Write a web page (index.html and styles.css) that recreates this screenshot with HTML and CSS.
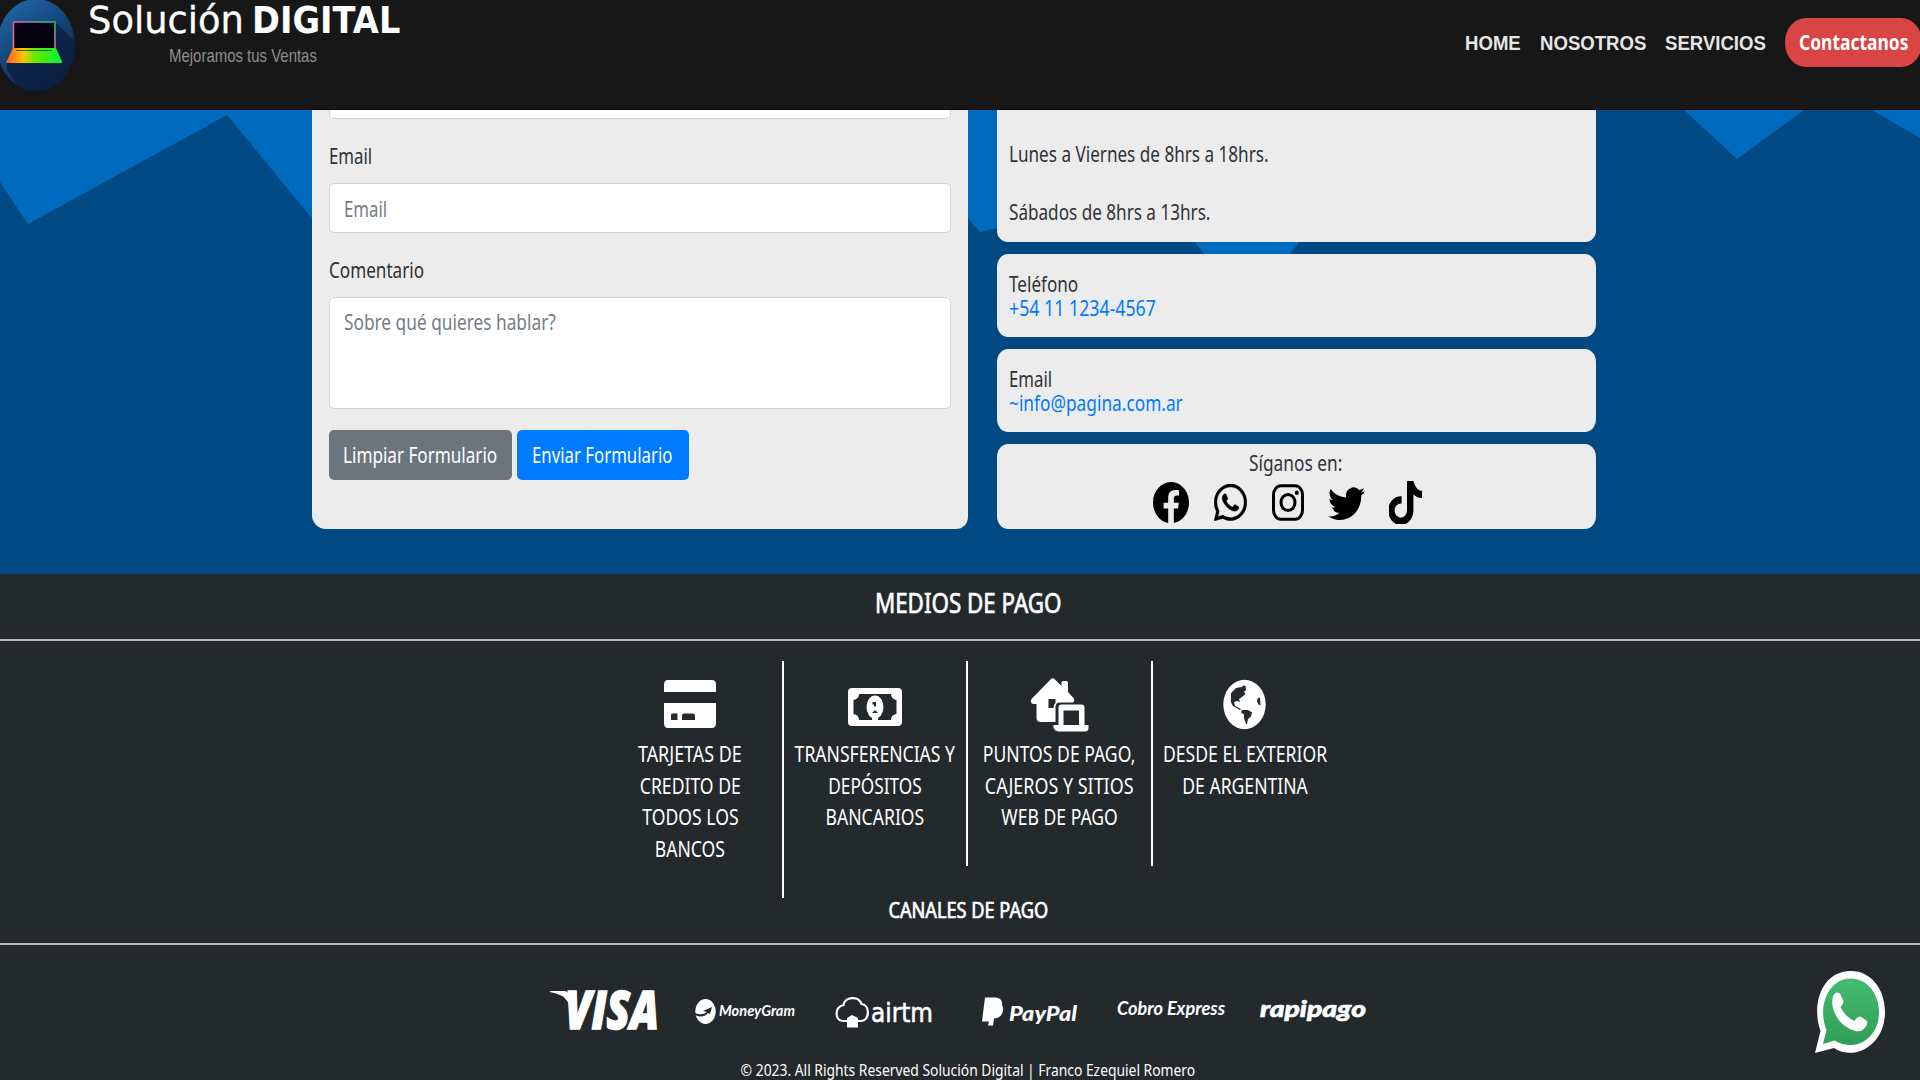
FILE: index.html
```html
<!DOCTYPE html>
<html lang="es">
<head>
<meta charset="utf-8">
<title>Solución Digital</title>
<link rel="stylesheet" href="styles.css">
</head>
<body>
<header class="header">
  <svg class="logo" viewBox="0 0 76 92">
    <defs>
      <linearGradient id="disc" x1="0" y1="0" x2=".6" y2="1"><stop offset="0" stop-color="#1d6fae"/><stop offset=".5" stop-color="#17477f"/><stop offset="1" stop-color="#101f45"/></linearGradient>
      <linearGradient id="base" x1="0" y1="0" x2="1" y2="0"><stop offset="0" stop-color="#ff5a1e"/><stop offset=".3" stop-color="#ffc400"/><stop offset=".5" stop-color="#6be800"/><stop offset="1" stop-color="#00f53d"/></linearGradient>
      <linearGradient id="frame" x1="0" y1="1" x2="1" y2="0"><stop offset="0" stop-color="#ff7a30"/><stop offset=".5" stop-color="#e35ab0"/><stop offset="1" stop-color="#15c96a"/></linearGradient>
      <clipPath id="round"><ellipse cx="36" cy="45" rx="39" ry="46"/></clipPath>
    </defs>
    <ellipse cx="36" cy="45" rx="39" ry="46" fill="url(#disc)"/>
    <path d="M55 22l25 24v50H24L7 70V62z" fill="#0b1f40" opacity=".75" clip-path="url(#round)"/>
    <rect x="13.500" y="22" width="41.500" height="27" fill="#05030f" stroke="url(#frame)" stroke-width="1.600"/>
    <path d="M13 48h43l6 13.500V63H6.500v-1.500z" fill="url(#base)"/>
    <path d="M16 50.500h36" stroke="#2a6a20" stroke-width="1"/>
  </svg>
  <div class="brand">
    <div class="brand-name"><span class="fit thin">Solución</span><span class="fit thick">DIGITAL</span></div>
    <div class="tagline"><span class="fit">Mejoramos tus Ventas</span></div>
  </div>
  <nav class="nav">
    <a class="nav-home"><span class="fit">HOME</span></a>
    <a class="nav-about"><span class="fit">NOSOTROS</span></a>
    <a class="nav-services"><span class="fit">SERVICIOS</span></a>
    <a class="cta"><span class="fit">Contactanos</span></a>
  </nav>
</header>

<main class="contact">
  <svg class="backdrop" viewBox="0 0 1920 464">
    <path fill="#006bbe" d="M0 0V72L28 114 227 5 330 130V0zM950 0V87L980 122 1010 115V0zM1150 70L1204 144H1290L1345 70zM1684 0L1737 49 1804 0zM1872 0L1920 28V0z"/>
  </svg>
  <section class="form">
    <div class="field field-cut"></div>
    <div class="label"><span class="fit narrow">Email</span></div>
    <div class="field"><span class="fit narrow">Email</span></div>
    <div class="label"><span class="fit">Comentario</span></div>
    <div class="field area"><span class="fit wide">Sobre qué quieres hablar?</span></div>
    <div class="buttons">
      <div class="btn clear"><span class="fit">Limpiar Formulario</span></div>
      <div class="btn send"><span class="fit narrow">Enviar Formulario</span></div>
    </div>
  </section>
  <aside class="info">
    <div class="card hours">
      <p><span class="fit">Lunes a Viernes de 8hrs a 18hrs.</span></p>
      <p><span class="fit">Sábados de 8hrs a 13hrs.</span></p>
    </div>
    <div class="card pair">
      <p><span class="fit">Teléfono</span></p>
      <a><span class="fit phone">+54 11 1234-4567</span></a>
    </div>
    <div class="card pair">
      <p><span class="fit narrow">Email</span></p>
      <a><span class="fit wide">~info@pagina.com.ar</span></a>
    </div>
    <div class="card social">
      <p><span class="fit wide">Síganos en:</span></p>
      <div class="social-row">
        <svg class="s-fb" viewBox="0 0 16 16" preserveAspectRatio="none"><path d="M16 8.049c0-4.446-3.582-8.050-8-8.050C3.580 0-.002 3.603-.002 8.050c0 4.017 2.926 7.347 6.750 7.951v-5.625h-2.030V8.050H6.750V6.275c0-2.017 1.195-3.131 3.022-3.131.876 0 1.791.157 1.791.157v1.980h-1.009c-.993 0-1.303.621-1.303 1.258v1.510h2.218l-.354 2.326H9.250V16c3.824-.604 6.750-3.934 6.750-7.951z"/></svg>
        <svg class="s-wa" viewBox="0 0 16 16" preserveAspectRatio="none"><path d="M13.601 2.326A7.854 7.854 0 0 0 7.994 0C3.627 0 .068 3.558.064 7.926c0 1.399.366 2.760 1.057 3.965L0 16l4.204-1.102a7.933 7.933 0 0 0 3.790.965h.004c4.368 0 7.926-3.558 7.930-7.930A7.898 7.898 0 0 0 13.600 2.326zM7.994 14.521a6.573 6.573 0 0 1-3.356-.920l-.240-.144-2.494.654.666-2.433-.156-.251a6.560 6.560 0 0 1-1.007-3.505c0-3.626 2.957-6.584 6.591-6.584a6.560 6.560 0 0 1 4.660 1.931 6.557 6.557 0 0 1 1.928 4.660c-.004 3.639-2.961 6.592-6.592 6.592zm3.615-4.934c-.197-.099-1.170-.578-1.353-.646-.182-.065-.315-.099-.445.099-.133.197-.513.646-.627.775-.114.133-.232.148-.430.050-.197-.100-.836-.308-1.592-.985-.590-.525-.985-1.175-1.103-1.372-.114-.198-.011-.304.088-.403.087-.088.197-.232.296-.346.100-.114.133-.198.198-.330.065-.134.034-.248-.015-.347-.050-.099-.445-1.076-.612-1.470-.160-.389-.323-.335-.445-.340-.114-.007-.247-.007-.380-.007a.729.729 0 0 0-.529.247c-.182.198-.691.677-.691 1.654 0 .977.710 1.916.810 2.049.098.133 1.394 2.132 3.383 2.992.470.205.840.326 1.129.418.475.152.904.129 1.246.080.380-.058 1.171-.480 1.338-.943.164-.464.164-.860.114-.943-.049-.084-.182-.133-.380-.232z" stroke="#000" stroke-width=".15"/></svg>
        <svg class="s-ig" viewBox="0 0 32 37"><rect x="1.500" y="1.700" width="29" height="33.600" rx="7.500" ry="9" fill="none" stroke="#000" stroke-width="3"/><ellipse cx="16" cy="18.500" rx="7" ry="8" fill="none" stroke="#000" stroke-width="3"/><ellipse cx="24.800" cy="8.800" rx="2" ry="2.300"/></svg>
        <svg class="s-tw" viewBox="0 1 16 14" preserveAspectRatio="none"><path d="M5.026 15c6.038 0 9.341-5.003 9.341-9.334 0-.140 0-.282-.006-.422A6.685 6.685 0 0 0 16 3.542a6.658 6.658 0 0 1-1.889.518 3.301 3.301 0 0 0 1.447-1.817 6.533 6.533 0 0 1-2.087.793A3.286 3.286 0 0 0 7.875 6.030a9.325 9.325 0 0 1-6.767-3.429 3.289 3.289 0 0 0 1.018 4.382A3.323 3.323 0 0 1 .640 6.575v.045a3.288 3.288 0 0 0 2.632 3.218 3.203 3.203 0 0 1-.865.115 3.230 3.230 0 0 1-.614-.057 3.283 3.283 0 0 0 3.067 2.277A6.588 6.588 0 0 1 .780 13.580a6.320 6.320 0 0 1-.780-.045A9.344 9.344 0 0 0 5.026 15z"/></svg>
        <svg class="s-tt" viewBox="1 0 14 16" preserveAspectRatio="none"><path d="M9 0h1.980c.144.715.540 1.617 1.235 2.512C12.895 3.389 13.797 4 15 4v2c-1.753 0-3.070-.814-4-1.829V11a5 5 0 1 1-5-5v2a3 3 0 1 0 3 3V0z" stroke="#000" stroke-width=".7"/></svg>
      </div>
    </div>
  </aside>
</main>

<footer class="footer">
  <h2><span class="fit">MEDIOS DE PAGO</span></h2>
  <div class="methods">
    <div class="method">
      <svg viewBox="0 0 60 60"><path d="M10 7h40q4 0 4 5v7H2v-7q0-5 4-5zM2 30h52v20q0 5-4 5H6q-4 0-4-5zM10 40.500q-1 0-1 1.500v5h6.500v-6.500zM22 40.500q-2 0-2 2V47h13v-4q0-2.500-2-2.500z" transform="translate(2 0)" fill="#fff" fill-rule="evenodd"/></svg>
      <p><span class="fit wider">TARJETAS DE</span></p><p><span class="fit">CREDITO DE</span></p><p><span class="fit">TODOS LOS</span></p><p><span class="fit">BANCOS</span></p>
    </div>
    <div class="method">
      <svg viewBox="0 0 60 60"><path fill="#fff" fill-rule="evenodd" d="M7 15H53q4 0 4 4V49q0 4-4 4H7q-4 0-4-4V19q0-4 4-4zM14 21q0 5-5.500 6V41q5.500 1 5.500 6H46q0-5 5.500-6V27q-5.500-1-5.500-6z"/><ellipse cx="30" cy="34" rx="8.500" ry="11.500" fill="#fff"/><path d="M27 42h6v8h-6z" fill="#fff"/><path d="M27.500 29h3.500v4.500h-2v-2h-1.500zM27 40l3-3 3 3z" fill="#24292c"/></svg>
      <p><span class="fit">TRANSFERENCIAS Y</span></p><p><span class="fit tight">DEPÓSITOS</span></p><p><span class="fit">BANCARIOS</span></p>
    </div>
    <div class="method">
      <svg viewBox="0 0 60 60"><path fill="#fff" d="M22.500 5.500q1.500-.8 3 .5l7 7V9.500q0-1.500 1.500-1.500h3.500q1.500 0 1.500 1.500V19l5.500 6q2 2.500-.5 4.500H30q-3.500.5-3.500 4.500V49H12q-4.500 0-4.500-4.500V31H4q-3.500-1.500-1.500-5z"/><path fill="#24292c" d="M19.500 26h7v4q-2 1.500-2 5h-5z"/><path fill="#fff" fill-rule="evenodd" d="M32.500 31.500h20q3 0 3 3V52h4v3q0 3.500-4 3.500h-26q-4-.5-5-4V52h5V34.500q0-3 3-3zM34.500 37.500V52H50V37.500z"/></svg>
      <p><span class="fit">PUNTOS DE PAGO,</span></p><p><span class="fit wider">CAJEROS Y SITIOS</span></p><p><span class="fit">WEB DE PAGO</span></p>
    </div>
    <div class="method">
      <svg viewBox="0 0 60 60"><ellipse cx="29.500" cy="31.500" rx="21.200" ry="24.700" fill="#fff"/><path fill="#24292c" d="M16 20l5-5 6-1 1-1.500 2.500.5.500 4-2 2 1.500 2-3.500 3-3 2 1 3-3-1-3 1 1 4 6 3-1 1-7-4q-3-4-2-8zM27 37h6l4 2.500-1 4-3 2.500-1 5h-1l-2-6v-3.500l-3-2zM42.500 25.500l2.500-1 .5 8-2-1-1.500-3z"/></svg>
      <p><span class="fit">DESDE EL EXTERIOR</span></p><p><span class="fit">DE ARGENTINA</span></p>
    </div>
  </div>
  <h3><span class="fit">CANALES DE PAGO</span></h3>
  <svg class="channels" viewBox="540 980 840 60" fill="#fff">
    <text class="l-visa" x="565" y="1029" textLength="94" lengthAdjust="spacingAndGlyphs">VISA</text>
    <path d="M550 991h15q4 1 5 6l4 18-6-13q-5-8-18-10z"/>
    <ellipse cx="705.500" cy="1011.500" rx="10.200" ry="12.500"/>
    <path d="M695 1013q7 3 12-1l-4-1 9-4-2 7-2-1q-5 6-13 2" fill="#24292c"/>
    <text class="l-mg" x="719" y="1016" textLength="76" lengthAdjust="spacingAndGlyphs">MoneyGram</text>
    <path d="M847.500 1021h-5c-8-1-8-14 1-16 1-8 15-10 18-1 9 1 8 17 0 17h-7" fill="none" stroke="#fff" stroke-width="2.200"/>
    <path d="M847 1018l5-3 6 3v9.500h-11z"/>
    <text class="l-air" x="871" y="1021.500" textLength="62" lengthAdjust="spacingAndGlyphs">airtm</text>
    <path d="M985 997.500h11q7 1 6 8 3 4-1 10-3 3-7 3l-1 7h-5l1-4h-7z"/>
    <text class="l-pp" x="1009" y="1020.500" textLength="68" lengthAdjust="spacingAndGlyphs">PayPal</text>
    <text class="l-ce" x="1117" y="1015" textLength="108" lengthAdjust="spacingAndGlyphs">Cobro Express</text>
    <text class="l-rp" x="1260" y="1016.500" textLength="106" lengthAdjust="spacingAndGlyphs">rapipago</text>
  </svg>
  <div class="copyright"><span class="fit">© 2023. All Rights Reserved Solución Digital | Franco Ezequiel Romero</span></div>
</footer>

<svg class="chat" viewBox="0 0 70 82">
  <defs><linearGradient id="wa" x1="0" y1="0" x2="0" y2="1"><stop offset="0" stop-color="#46ba70"/><stop offset="1" stop-color="#2f9f55"/></linearGradient></defs>
  <path fill="#fff" d="M0 82L5.500 60C-4 33 7 0 36 0c20 0 34 18 34 41 0 32-29 50-51 36z"/>
  <path fill="url(#wa)" d="M8 73l3.500-14C2 36 13 7.500 36 7.500c16 0 28 15 28 33.500 0 27-24 41-44.500 28.500z"/>
  <path fill="#fff" d="M18.500 24q4-4.500 7-.5l3 7q0 3-3 5.500 5 10 14 14 3-5 6-4.500l6 4q1.500 2 0 5-4 7-11 5.500Q22 55 17.500 35q-1-6 1-11z"/>
</svg>
</body>
</html>
```
FILE: styles.css
```css
* { box-sizing: border-box; }
body { margin: 0; width: 1920px; height: 1080px; overflow: hidden; background: #24292c; color: #2f3337; font: 21px/32px "Noto Sans", sans-serif; }
p, h2, h3 { margin: 0; font-weight: 400; }
svg { display: block; }
.fit { display: inline-block; white-space: nowrap; transform: scaleX(.815); transform-origin: 0 50%; }
.narrow { transform: scaleX(.8); }
.wide { transform: scaleX(.823); }
.phone { transform: scaleX(.845); }

.header { display: flex; height: 110px; background: #171717; border-bottom: 1px solid #080808; }
.logo { width: 76px; height: 92px; flex: none; }
.brand { width: 360px; padding-left: 12px; }
.brand-name { display: flex; height: 40px; color: #fff; font: 38px/40px "DejaVu Sans", sans-serif; }
.brand-name .thin { width: 164px; transform: scaleX(.97); -webkit-text-stroke: .3px #fff; }
.brand-name .thick { font-weight: 700; transform: scaleX(.885); }
.tagline { padding-left: 81px; color: #8e8e8e; font: 18.500px/32px "Liberation Sans", sans-serif; }
.tagline .fit { transform: scaleX(.808); }
.nav { display: flex; margin-left: auto; padding-top: 18px; color: #e6e6e6; font: bold 21px/50px "Liberation Sans", sans-serif; }
.nav .fit { transform: scaleX(.885); }
.nav-home { width: 75px; }
.nav-about { width: 125px; }
.nav-services { width: 120px; }
.cta { width: 137px; height: 49px; margin-right: -2px; padding-left: 14px; border-radius: 21px / 24px; background: #d94444; color: #fff; font-family: "Noto Sans", sans-serif; line-height: 49px; }
.nav .cta .fit { transform: scaleX(.83); }

.contact { position: relative; display: flex; gap: 29px; height: 464px; padding-left: 311.500px; background: #004983; }
.backdrop { position: absolute; inset: 0; }
.form { position: relative; width: 656px; height: 419.400px; padding: 0 17px 0 17.500px; background: #ececec; border-radius: 0 0 12px 14px; }
.field { height: 50px; padding: 0 13.500px; background: #fff; border: 1.500px solid #ced4da; border-radius: 5px; color: #757d85; line-height: 50px; }
.field-cut { height: 9px; border-top: 0; border-radius: 0 0 5px 5px; }
.label { height: 64px; padding-top: 21px; }
.area { height: 112px; line-height: 49px; }
.buttons { display: flex; gap: 5px; padding-top: 21px; }
.btn { width: 182.500px; height: 50px; padding-left: 14px; border-radius: 5px; background: #6c757d; color: #fff; line-height: 50px; }
.send { width: 172px; padding-left: 15px; background: #007bff; }

.info { position: relative; width: 599px; display: flex; flex-direction: column; gap: 12.500px; }
.card { height: 82.600px; padding: 0 12px; background: #ececec; border-radius: 11px / 13px; }
.hours { height: 131.500px; padding-top: 28px; border-radius: 0 0 11px 11px; }
.hours p { height: 57.500px; }
.pair { padding-top: 17.500px; line-height: 24px; }
.pair a { display: block; padding-left: .5px; color: #007bff; }
.social { height: 84.500px; padding-top: 3px; text-align: center; }
.social .fit, .footer .fit { transform-origin: 50% 50%; }
.social-row { display: flex; align-items: center; height: 43px; padding-left: 144px; margin-top: 2px; }
.s-fb { width: 36px; height: 41px; margin-right: 25px; }
.s-wa { width: 33px; height: 37px; margin-right: 25px; }
.s-ig { width: 32px; height: 37px; margin-right: 24px; }
.s-tw { width: 37px; height: 35px; margin-right: 24px; }
.s-tt { width: 33px; height: 43px; }

.footer { color: #fff; text-align: center; }
.footer h2 { height: 67px; padding: 10px 0 0 16px; border-bottom: 2px solid #b4b6b7; font-size: 27.600px; line-height: 36px; -webkit-text-stroke: .7px #fff; }
.footer h2 .fit { transform: scaleX(.81); }
.methods { display: flex; align-items: flex-start; height: 240px; padding: 20px 0 0 599px; }
.method { display: flex; flex-direction: column; align-items: center; width: 184.500px; height: 205px; padding-top: 12px; border-right: 2px solid #fff; line-height: 31.600px; }
.method .fit { transform: scaleX(.837); }
.method .wider { transform: scaleX(.853); }
.method .tight { transform: scaleX(.82); }
.method:first-child { height: 237px; }
.method:last-child { border: 0; }
.method svg { width: 60px; height: 60px; margin-bottom: 6px; }
.footer h3 { height: 64px; padding: 12.500px 0 0 16px; border-bottom: 2px solid #b4b6b7; font-size: 21px; line-height: 32px; -webkit-text-stroke: .7px #fff; }
.footer h3 .fit { transform: scaleX(.865); }
.channels { width: 840px; height: 60px; margin: 35px 0 0 540px; }
.l-visa { font: italic 800 53px "Open Sans", sans-serif; stroke: #fff; stroke-width: 1.500px; }
.l-mg { font: italic 700 16px Lato, sans-serif; }
.l-air { font: 400 27px "DejaVu Sans", sans-serif; stroke: #fff; stroke-width: .6px; }
.l-pp { font: italic 900 21px Lato, sans-serif; }
.l-ce { font: italic 700 19px Lato, sans-serif; }
.l-rp { font: italic 900 22px Lato, sans-serif; stroke: #fff; stroke-width: .6px; }
.copyright { height: 22px; padding-left: 16px; margin-top: 18px; font-size: 17px; line-height: 24px; }
.chat { position: absolute; left: 1815px; top: 971px; width: 70px; height: 82px; }
```
